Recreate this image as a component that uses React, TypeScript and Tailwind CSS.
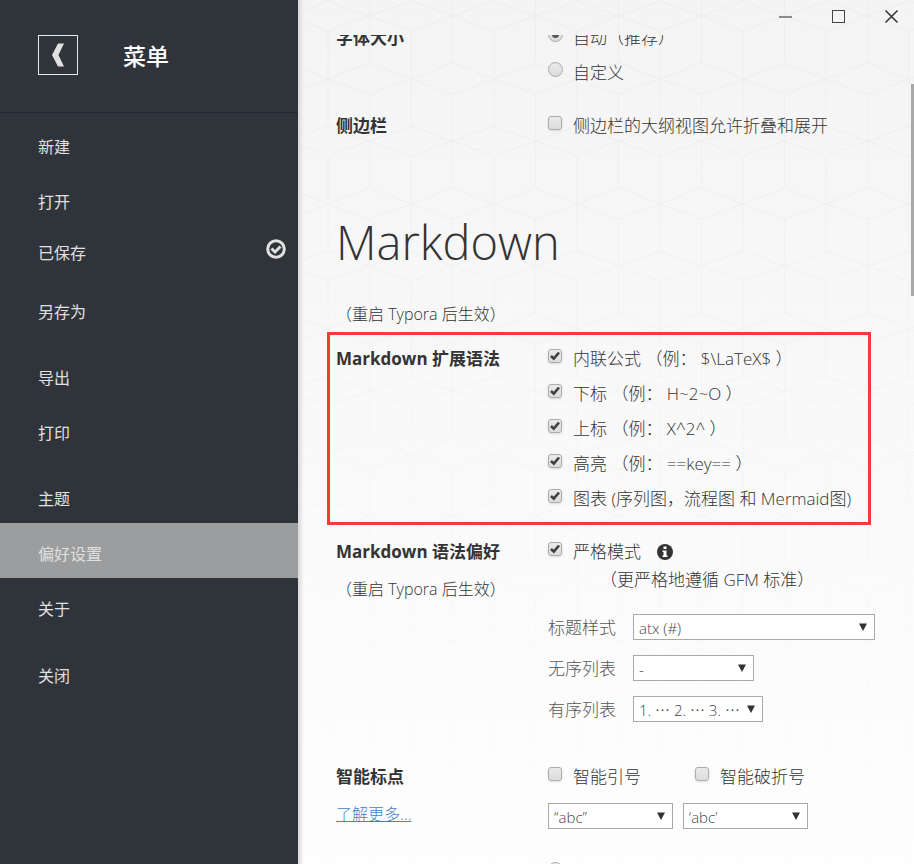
import type { ReactNode } from "react";

function HexBackground() {
  return (
    <svg className="pointer-events-none absolute inset-0 h-full w-full" aria-hidden="true">
      <defs>
        <pattern id="cubes" x="30" y="1" width="83" height="125" patternUnits="userSpaceOnUse">
          <path
            d="M0 0 L41.5 15 L83 0 M0 30 L41.5 15 L83 30 M0 78 L41.5 62 L83 78 M0 78 L41.5 93 L83 78 M0 30 V125 M83 30 V125 M41.5 0 V62 M41.5 93 V125"
            fill="none"
            stroke="#eeeeee"
            strokeWidth="1.200"
          />
        </pattern>
        <linearGradient id="fade" x1="0" y1="0" x2="0" y2="1">
          <stop offset="0" stopColor="#f4f4f4" stopOpacity="0" />
          <stop offset="0.500" stopColor="#f9f9f9" stopOpacity="0.650" />
          <stop offset="1" stopColor="#fefefe" stopOpacity="0.950" />
        </linearGradient>
      </defs>
      <rect width="100%" height="100%" fill="url(#cubes)" />
      <rect width="100%" height="100%" fill="url(#fade)" />
    </svg>
  );
}

function MenuItem({ label, active = false }: { label: string; active?: boolean }) {
  return (
    <button
      type="button"
      className={`flex h-[55px] w-full items-center pt-[7px] pl-[38px] text-left ${active ? "bg-[#9c9d9e]" : ""}`}
    >
      {label}
    </button>
  );
}

function Sidebar() {
  return (
    <aside className="w-[298px] shrink-0 bg-[#2f333a] text-base text-[#e0e0e0]">
      <header className="flex h-[113px] items-center gap-[45px] border-b border-[#1f2a36] pl-[38px]">
        <button
          type="button"
          aria-label="返回"
          className="mb-[2px] flex size-10 items-center justify-center border border-[#e8e8e8]"
        >
          <svg width="12" height="24" viewBox="0 0 12 24" aria-hidden="true">
            <path d="M6 0.500H12L6.500 12L12 23.500H6L0 12Z" fill="#e0e0e0" />
          </svg>
        </button>
        <h1 className="text-[23px] leading-8 font-medium text-white">菜单</h1>
      </header>
      <nav className="flex flex-col pt-[3px]">
        <MenuItem label="新建" />
        <MenuItem label="打开" />
        <button type="button" className="flex h-[55px] items-center justify-between pr-3 pb-[2px] pl-[38px]">
          已保存
          <svg className="mb-2" width="20" height="20" viewBox="0 0 20 20" fill="none" stroke="#e0e0e0" aria-hidden="true">
            <circle cx="10" cy="10" r="8.300" strokeWidth="3" />
            <path d="M5.500 9.500L9 13L14.500 7.500" strokeWidth="3" />
          </svg>
        </button>
        <MenuItem label="另存为" />
        <div className="mt-[11px]">
          <MenuItem label="导出" />
          <MenuItem label="打印" />
        </div>
        <div className="mt-[11px]">
          <MenuItem label="主题" />
          <MenuItem label="偏好设置" active />
          <MenuItem label="关于" />
        </div>
        <div className="mt-3">
          <MenuItem label="关闭" />
        </div>
      </nav>
    </aside>
  );
}

function WindowControls() {
  return (
    <div className="relative flex h-[35px] shrink-0 justify-end gap-[38px] pt-[9px] pr-[15px]">
      <button type="button" aria-label="最小化" className="size-[15px]">
        <svg width="15" height="15" viewBox="0 0 15 15" aria-hidden="true">
          <path d="M1 8H14" stroke="#8a8a8a" strokeWidth="2" />
        </svg>
      </button>
      <button type="button" aria-label="最大化" className="size-[15px]">
        <svg width="15" height="15" viewBox="0 0 15 15" aria-hidden="true">
          <rect x="1.500" y="1.500" width="12" height="12" fill="none" stroke="#444" />
        </svg>
      </button>
      <button type="button" aria-label="关闭窗口" className="size-[15px]">
        <svg width="15" height="15" viewBox="0 0 15 15" aria-hidden="true">
          <path d="M1.500 1.500L13.500 13.500M13.500 1.500L1.500 13.500" stroke="#333" strokeWidth="1.500" />
        </svg>
      </button>
    </div>
  );
}

function Check({ children, checked = false }: { children: ReactNode; checked?: boolean }) {
  return (
    <label className="flex h-[35px] items-center gap-[11px] whitespace-nowrap">
      <span className="relative mb-[6px] size-[14px] shrink-0">
        <input
          type="checkbox"
          defaultChecked={checked}
          className="peer block size-[14px] appearance-none rounded-[3px] border border-[#acacac] bg-linear-to-b from-[#eaeaea] to-[#dcdcdc] shadow-sm"
        />
        <svg
          className="pointer-events-none absolute inset-0 hidden peer-checked:block"
          width="14"
          height="14"
          viewBox="0 0 14 14"
          fill="none"
          aria-hidden="true"
        >
          <path d="M3 7L5.800 9.700L11 3.500" stroke="#404040" strokeWidth="2.600" />
        </svg>
      </span>
      <span>{children}</span>
    </label>
  );
}

function Radio({ children, name, checked = false }: { children: ReactNode; name: string; checked?: boolean }) {
  return (
    <label className="flex h-[35px] items-center gap-[10px] whitespace-nowrap">
      <span className="relative mb-[6px] size-[15px] shrink-0">
        <input
          type="radio"
          name={name}
          defaultChecked={checked}
          className="peer block size-[15px] appearance-none rounded-full border border-[#a8a8a8] bg-linear-to-b from-[#eaeaea] to-[#dcdcdc]"
        />
        <span className="pointer-events-none absolute top-1 left-1 hidden size-[7px] rounded-full bg-[#555] peer-checked:block" />
      </span>
      <span>{children}</span>
    </label>
  );
}

function Select({ id, label, value, width }: { id: string; label?: string; value: string; width: string }) {
  return (
    <span className={`relative ${width}`}>
      <select
        id={id}
        aria-label={label}
        className="block h-[26px] w-full appearance-none border border-[#a9a9a9] bg-white pt-px pl-[5px] text-[15px] leading-6 font-light text-[#444]"
      >
        <option>{value}</option>
      </select>
      <svg
        className="pointer-events-none absolute top-[9px] right-2"
        width="8"
        height="8"
        viewBox="0 0 8 8"
        aria-hidden="true"
      >
        <path d="M0 0.500H8L4 8Z" fill="#333" />
      </svg>
    </span>
  );
}

function Field({ id, label, value, width }: { id: string; label: string; value: string; width: string }) {
  return (
    <div className="flex h-[26px] items-center">
      <label htmlFor={id} className="w-[85px] shrink-0 pt-[2px] text-[#555]">
        {label}
      </label>
      <Select id={id} value={value} width={width} />
    </div>
  );
}

function Section({ title, aside, children }: { title?: string; aside?: ReactNode; children: ReactNode }) {
  return (
    <section className="flex">
      <div className="w-[212px] shrink-0">
        <h3 className="h-[35px] leading-[35px] font-bold whitespace-nowrap">{title}</h3>
        {aside}
      </div>
      <div className="min-w-0 flex-1">{children}</div>
    </section>
  );
}

function RestartNote() {
  return <p className="h-[35px] text-base leading-[35px]">（重启 Typora 后生效）</p>;
}

function Preferences() {
  return (
    <div className="relative min-h-0 flex-1 overflow-hidden">
      <div className="-mt-[15px] flex flex-col pr-[39px] pl-[38px]">
        <Section title="字体大小">
          <Radio name="size" checked>
            自动（推荐）
          </Radio>
          <Radio name="size">自定义</Radio>
        </Section>
        <div className="mt-[18px]">
          <Section title="侧边栏">
            <Check>侧边栏的大纲视图允许折叠和展开</Check>
          </Section>
        </div>
        <h2 className="mt-[64px] text-[47px] leading-[70px] font-light">Markdown</h2>
        <div className="mt-5">
          <RestartNote />
        </div>
        <div className="-ml-[9px] mr-[4px] border-3 border-[#fb3838] py-[6px] pl-[6px]">
          <Section title="Markdown 扩展语法">
            <Check checked>内联公式 （例： $\LaTeX$ ）</Check>
            <Check checked>下标 （例： H~2~O ）</Check>
            <Check checked>上标 （例： X^2^ ）</Check>
            <Check checked>高亮 （例： ==key== ）</Check>
            <Check checked>图表 (序列图，流程图 和 Mermaid图)</Check>
          </Section>
        </div>
        <div className="mt-[9px]">
          <Section
            title="Markdown 语法偏好"
            aside={
              <div className="mt-[3px]">
                <RestartNote />
              </div>
            }
          >
            <div className="flex items-center gap-4">
              <Check checked>严格模式</Check>
              <svg width="16" height="16" viewBox="0 0 16 16" aria-hidden="true">
                <circle cx="8" cy="8" r="8" fill="#333" />
                <path d="M6.500 2.500H9.500V5H6.500ZM5.500 6.500H9.500V11.500H10.500V13H5.500V11.500H6.500V8H5.500Z" fill="#fff" />
              </svg>
            </div>
            <p className="pl-[52px] leading-[22px]">（更严格地遵循 GFM 标准）</p>
            <div className="mt-[23px] flex flex-col gap-[15px]">
              <Field id="heading" label="标题样式" value="atx (#)" width="w-[242px]" />
              <Field id="bullets" label="无序列表" value="-" width="w-[121px]" />
              <Field id="numbers" label="有序列表" value="1. ⋯ 2. ⋯ 3. ⋯" width="w-[130px]" />
            </div>
          </Section>
        </div>
        <div className="mt-[37px]">
          <Section
            title="智能标点"
            aside={
              <a href="#more" className="mt-[3px] block h-[35px] text-base leading-[35px] text-[#4183c4] underline">
                了解更多...
              </a>
            }
          >
            <div className="flex">
              <div className="w-[147px]">
                <Check>智能引号</Check>
              </div>
              <Check>智能破折号</Check>
            </div>
            <div className="mt-[9px] flex gap-[10px]">
              <Select id="double" label="双引号" value="“abc”" width="w-[125px]" />
              <Select id="single" label="单引号" value="‘abc’" width="w-[125px]" />
            </div>
            <div className="mt-[33px]">
              <input
                type="radio"
                aria-label="智能标点转换"
                className="block size-[15px] appearance-none rounded-full border border-[#a8a8a8] bg-[#eaeaea]"
              />
            </div>
          </Section>
        </div>
      </div>
    </div>
  );
}

export default function App() {
  return (
    <div className="flex h-screen overflow-hidden font-['Open_Sans','Noto_Sans_CJK_SC',sans-serif]">
      <Sidebar />
      <main className="relative flex min-w-0 flex-1 flex-col bg-linear-to-b from-[#f4f4f4] to-[#fefefe] text-[17px] font-light text-[#333]">
        <HexBackground />
        <div className="pointer-events-none absolute inset-y-0 left-0 w-[6px] bg-linear-to-r from-[#d8d8d8] to-transparent" />
        <WindowControls />
        <Preferences />
        <div className="absolute top-[84px] right-0 h-[212px] w-[3px] bg-[#a8a8a8]" />
      </main>
    </div>
  );
}
